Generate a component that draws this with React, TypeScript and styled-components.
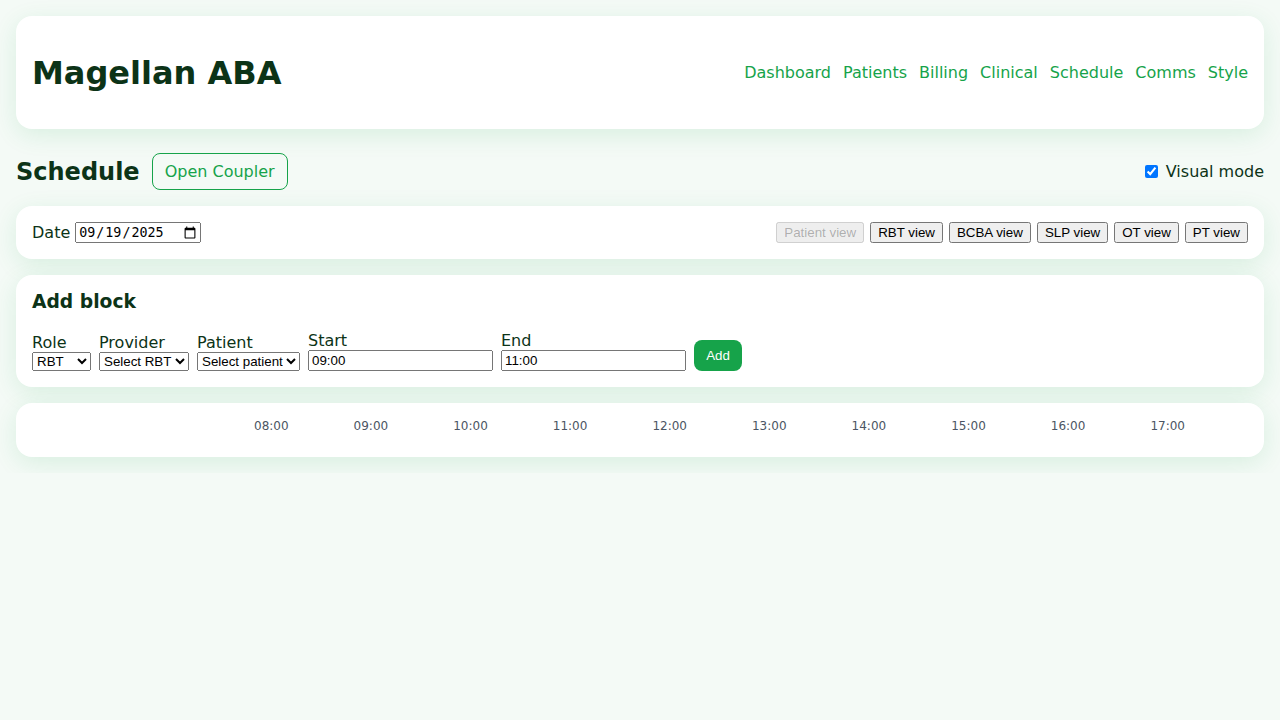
import React from "react";
import styled, { createGlobalStyle } from "styled-components";

const GlobalStyle = createGlobalStyle`
  html, body { margin: 0; padding: 0; }
  body {
    background: #f4faf6;
    font-family: "DejaVu Sans", sans-serif;
    color: #0c3317;
  }
`;

const Page = styled.div`
  padding: 16px;
  display: flex;
  flex-direction: column;
  gap: 16px;
`;

const Card = styled.section<{ $pad?: string }>`
  background: #ffffff;
  border-radius: 16px;
  box-shadow: 0 6px 24px rgba(22, 163, 74, 0.12);
  padding: ${(p) => p.$pad ?? "16px"};
`;

const Header = styled(Card)`
  height: 113px;
  box-sizing: border-box;
  display: flex;
  align-items: center;
  justify-content: space-between;
`;

const Brand = styled.h1`
  margin: 0;
  font-size: 32px;
  font-weight: 700;
  color: #0c3317;
`;

const Nav = styled.nav`
  display: flex;
  gap: 12px;
`;

const NavLink = styled.a`
  color: #16a34a;
  text-decoration: none;
  font-size: 16px;
`;

const TitleRow = styled.div`
  margin-top: 8px;
  display: flex;
  align-items: center;
  justify-content: space-between;
  height: 37px;
`;

const TitleGroup = styled.div`
  display: flex;
  align-items: center;
  gap: 12px;
`;

const PageTitle = styled.h2`
  margin: 0;
  font-size: 24px;
  font-weight: 700;
  color: #0c3317;
`;

const OutlineButton = styled.button`
  font-family: "DejaVu Sans", sans-serif;
  font-size: 16px;
  color: #16a34a;
  background: transparent;
  border: 1px solid #16a34a;
  border-radius: 8px;
  padding: 8px 12px;
  height: 37px;
  cursor: pointer;
`;

const Toggle = styled.label`
  display: flex;
  align-items: center;
  gap: 8px;
  font-size: 16px;
  color: #0c3317;
  input {
    margin: 0;
    width: 13px;
    height: 13px;
  }
`;

const Toolbar = styled(Card)`
  display: flex;
  align-items: center;
  justify-content: space-between;
`;

const DateLabel = styled.label`
  display: flex;
  align-items: center;
  gap: 5px;
  font-size: 16px;
  color: #0c3317;
  input {
    margin: 0;
  }
`;

const ViewButtons = styled.div`
  display: flex;
  gap: 6px;
`;

const ViewButton = styled.button`
  font-family: "Liberation Sans", Arial, sans-serif;
  font-size: 13.333px;
`;

const SectionTitle = styled.h3`
  margin: 0 0 19px;
  font-size: 18.72px;
  font-weight: 700;
  color: #0c3317;
`;

const FormRow = styled.div`
  display: flex;
  align-items: flex-end;
  gap: 8px;
`;

const Field = styled.label`
  display: flex;
  flex-direction: column;
  font-size: 16px;
  line-height: 19px;
  color: #0c3317;
  select, input {
    font-family: "Liberation Sans", Arial, sans-serif;
    font-size: 13.333px;
    margin: 0;
  }
`;

const TimeInput = styled.input`
  width: 185px;
  height: 21px;
  box-sizing: border-box;
`;

const AddButton = styled.button`
  font-family: "Liberation Sans", Arial, sans-serif;
  font-size: 13.333px;
  background: #16a34a;
  color: #ffffff;
  border: none;
  border-radius: 8px;
  padding: 8px 12px;
  height: 31px;
  width: 48px;
  cursor: pointer;
`;

const Timeline = styled(Card)`
  padding-bottom: 24px;
`;

const HourGrid = styled.div`
  display: grid;
  grid-template-columns: 220px repeat(10, 1fr);
  height: 14px;
  align-items: center;
`;

const HourLabel = styled.div`
  padding-left: 2px;
  font-size: 12px;
  color: #4b5563;
`;

const hours = ["08:00", "09:00", "10:00", "11:00", "12:00", "13:00", "14:00", "15:00", "16:00", "17:00"];
const navItems = ["Dashboard", "Patients", "Billing", "Clinical", "Schedule", "Comms", "Style"];
const views = ["Patient view", "RBT view", "BCBA view", "SLP view", "OT view", "PT view"];

export default function App() {
  return (
    <>
      <GlobalStyle />
      <Page>
        <Header>
          <Brand>Magellan ABA</Brand>
          <Nav>
            {navItems.map((n) => (
              <NavLink key={n} href="#">
                {n}
              </NavLink>
            ))}
          </Nav>
        </Header>

        <TitleRow>
          <TitleGroup>
            <PageTitle>Schedule</PageTitle>
            <OutlineButton>Open Coupler</OutlineButton>
          </TitleGroup>
          <Toggle>
            <input type="checkbox" defaultChecked />
            Visual mode
          </Toggle>
        </TitleRow>

        <Toolbar>
          <DateLabel>
            Date
            <input type="date" defaultValue="2025-09-19" />
          </DateLabel>
          <ViewButtons>
            {views.map((v, i) => (
              <ViewButton key={v} disabled={i === 0}>
                {v}
              </ViewButton>
            ))}
          </ViewButtons>
        </Toolbar>

        <Card>
          <SectionTitle>Add block</SectionTitle>
          <FormRow>
            <Field>
              Role
              <select defaultValue="RBT">
                <option>RBT</option>
                <option>BCBA</option>
                <option>SLP</option>
                <option>OT</option>
                <option>PT</option>
              </select>
            </Field>
            <Field>
              Provider
              <select>
                <option>Select RBT</option>
              </select>
            </Field>
            <Field>
              Patient
              <select>
                <option>Select patient</option>
              </select>
            </Field>
            <Field>
              Start
              <TimeInput type="text" defaultValue="09:00" />
            </Field>
            <Field>
              End
              <TimeInput type="text" defaultValue="11:00" />
            </Field>
            <AddButton>Add</AddButton>
          </FormRow>
        </Card>

        <Timeline>
          <HourGrid>
            <div />
            {hours.map((h) => (
              <HourLabel key={h}>{h}</HourLabel>
            ))}
          </HourGrid>
        </Timeline>
      </Page>
    </>
  );
}
